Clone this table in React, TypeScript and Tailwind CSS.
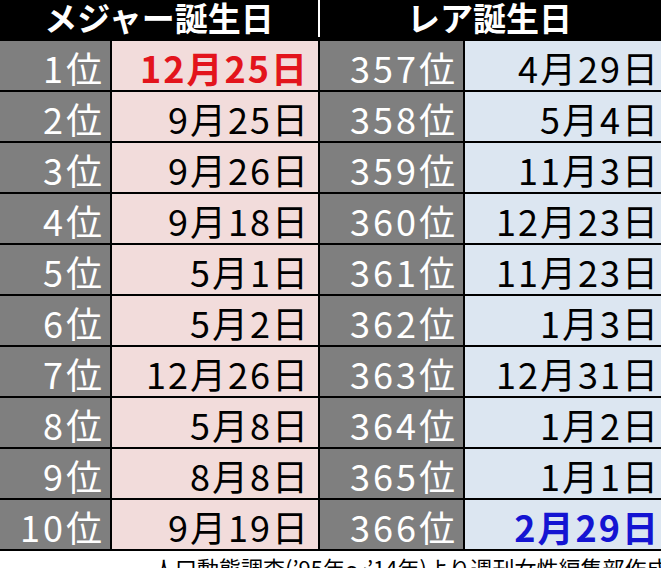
import React from 'react'

type Row = {
  rank: string
  major: string
  rareRank: string
  rare: string
}

const rows: Row[] = [
  { rank: '1位', major: '12月25日', rareRank: '357位', rare: '4月29日' },
  { rank: '2位', major: '9月25日', rareRank: '358位', rare: '5月4日' },
  { rank: '3位', major: '9月26日', rareRank: '359位', rare: '11月3日' },
  { rank: '4位', major: '9月18日', rareRank: '360位', rare: '12月23日' },
  { rank: '5位', major: '5月1日', rareRank: '361位', rare: '11月23日' },
  { rank: '6位', major: '5月2日', rareRank: '362位', rare: '1月3日' },
  { rank: '7位', major: '12月26日', rareRank: '363位', rare: '12月31日' },
  { rank: '8位', major: '5月8日', rareRank: '364位', rare: '1月2日' },
  { rank: '9位', major: '8月8日', rareRank: '365位', rare: '1月1日' },
  { rank: '10位', major: '9月19日', rareRank: '366位', rare: '2月29日' }
]

const font = { fontFamily: '"Noto Sans CJK JP", "Noto Sans", sans-serif' }

export default function App() {
  return (
    <div className="h-[568px] w-[661px] overflow-hidden bg-white" style={font}>
      <div className="flex w-[665px] flex-col gap-[2px] bg-black">
        {/* 見出し */}
        <div className="flex h-[39px] text-[33px] font-bold leading-none text-white">
          <div className="flex w-[318px] items-start justify-center pt-[1px]">メジャー誕生日</div>
          <div className="mb-[2px] w-[2px] bg-white" />
          <div className="flex flex-1 items-start justify-center pt-[1px] pr-[6px]">レア誕生日</div>
        </div>

        {/* ランキング */}
        {rows.map((row, i) => (
          <div key={row.rank} className="flex h-[49px] gap-[2px] text-[36px] leading-[52px]">
            <div className="w-[110px] bg-[#7f7f7f] pr-[5px] text-right tracking-[3px] text-white">{row.rank}</div>
            <div
              className={
                i === 0
                  ? 'w-[206px] bg-[#f2dcdb] pr-[9px] text-right font-bold tracking-[2px] text-[#e3141c]'
                  : 'w-[206px] bg-[#f2dcdb] pr-[8px] text-right tracking-[2px] text-black'
              }
            >
              {row.major}
            </div>
            <div className="w-[143px] bg-[#7f7f7f] pr-[5px] text-right tracking-[3px] text-white">{row.rareRank}</div>
            <div
              className={
                i === 9
                  ? 'flex-1 bg-[#dce6f1] pr-[5px] text-right font-bold tracking-[2px] text-[#1414d2]'
                  : 'flex-1 bg-[#dce6f1] pr-[5px] text-right tracking-[2px] text-black'
              }
            >
              {row.rare}
            </div>
          </div>
        ))}
        <div className="h-0" />
      </div>

      {/* 出典 */}
      <p className="mt-[3px] whitespace-nowrap pl-[153px] text-[22px] leading-[26px] text-black">
        人口動態調査(’95年～’14年)より週刊女性編集部作成
      </p>
    </div>
  )
}
